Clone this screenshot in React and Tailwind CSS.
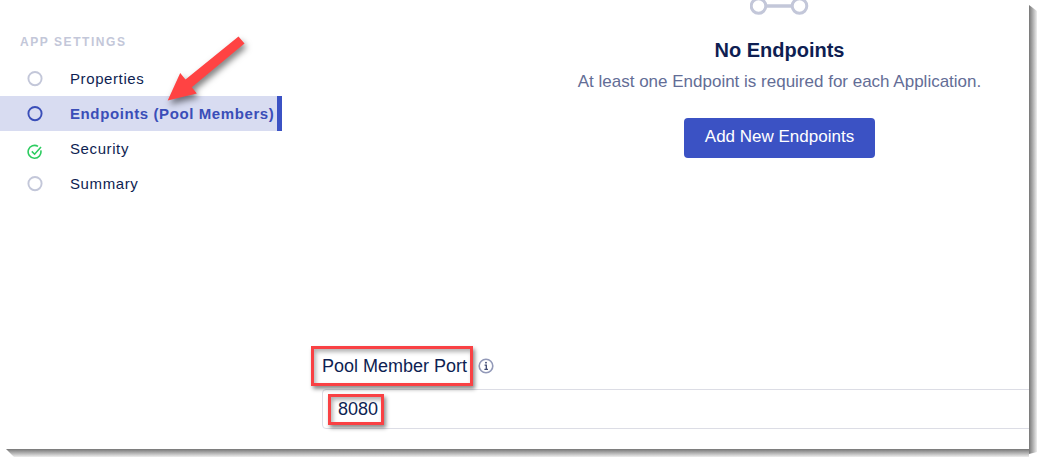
import React from 'react';

const steps = [
  { name: 'Properties', state: 'todo' },
  { name: 'Endpoints (Pool Members)', state: 'active' },
  { name: 'Security', state: 'done' },
  { name: 'Summary', state: 'todo' },
];

function StepIcon({ state }) {
  if (state === 'done') {
    return (
      <svg className="mt-1 size-4 shrink-0 text-[#2dcc60]" viewBox="0 0 16 16" fill="none" stroke="currentColor" strokeWidth="1.6" aria-hidden="true">
        <path d="M13.8 6.4A6.4 6.4 0 1 1 11 2.4" />
        <path d="M4.8 7.4 7.6 10.2 14 3" />
      </svg>
    );
  }
  return (
    <svg
      className={
        state === 'active'
          ? 'size-4 shrink-0 overflow-visible text-[#3a4eb8]'
          : 'size-4 shrink-0 overflow-visible text-[#c3c7d9]'
      }
      viewBox="0 0 16 16"
      fill="none"
      stroke="currentColor"
      strokeWidth="1.9"
      aria-hidden="true"
    >
      <circle cx="8" cy="6.6" r="6.6" />
    </svg>
  );
}

function Sidebar() {
  return (
    <nav aria-label="App settings" className="relative w-[282px] shrink-0 pt-[35px]">
      <h2 className="mb-3 pl-5 text-xs leading-[14px] font-bold tracking-[0.13em] text-[#c3c7d9]">APP SETTINGS</h2>
      <ul>
        {steps.map((step) => (
          <li key={step.name}>
            <a
              href="#"
              aria-current={step.state === 'active' ? 'step' : undefined}
              className={
                step.state === 'active'
                  ? 'flex h-[35px] items-center gap-[27px] border-r-[5px] border-[#3b52c4] bg-[#d8dcf1] pt-0.5 pl-[27px] text-[15px] font-bold tracking-[0.04em] whitespace-nowrap text-[#3a4eb8]'
                  : 'flex h-[35px] items-center gap-[27px] pt-0.5 pl-[27px] text-[15px] tracking-[0.04em] whitespace-nowrap text-[#0e1e52]'
              }
            >
              <StepIcon state={step.state} />
              {step.name}
            </a>
          </li>
        ))}
      </ul>
      <svg className="absolute top-8 left-40 h-20 w-24 overflow-visible drop-shadow-[2px_4px_3px_rgba(0,0,0,0.5)]" viewBox="0 0 96 80" aria-hidden="true">
        <path fill="#ff4343" d="M78.5 4.5 84.5 11.5 31.8 55.2 36.8 61.5 7.7 68.4 20.2 41 25.5 47.5Z" />
      </svg>
    </nav>
  );
}

function EmptyState() {
  return (
    <section className="flex flex-col items-center">
      <svg className="h-[15px] w-[60px]" viewBox="0 0 60 15" fill="none" stroke="#c3c7d9" aria-hidden="true">
        <circle cx="8.5" cy="6" r="7.3" strokeWidth="3" />
        <circle cx="49.5" cy="6" r="7.3" strokeWidth="3" />
        <path strokeWidth="3.5" d="M16 6h26" />
      </svg>
      <h1 className="mt-[23px] text-xl leading-6 font-bold text-[#0e1e52]">No Endpoints</h1>
      <p className="mt-2 text-[17px] leading-6 text-[#636d96]">At least one Endpoint is required for each Application.</p>
      <button type="button" className="mt-6 h-10 rounded bg-[#3b52c4] px-[21px] pb-0.5 text-[17px] text-white">
        Add New Endpoints
      </button>
    </section>
  );
}

function PortField() {
  return (
    <div className="mt-[188px] text-lg text-[#0e1e52]">
      <div className="-ml-[11px] flex items-center gap-[5px]">
        <label
          htmlFor="port"
          className="relative z-10 flex h-10 items-center border-[3px] border-[#f94144] pr-[3px] pl-2 shadow-[2px_3px_4px_rgba(0,0,0,0.45),inset_2px_3px_4px_rgba(0,0,0,0.3)]"
        >
          Pool Member Port
        </label>
        <svg className="size-4" viewBox="0 0 16 16" fill="none" stroke="#9299b8" strokeWidth="1.6" aria-hidden="true">
          <circle cx="8" cy="8" r="6.8" />
          <path stroke="#3d4871" strokeWidth="1.3" d="M6.6 7.2h1.7v4.2M6.4 11.4h3.6" />
          <circle cx="8" cy="4.7" r="0.9" fill="#3d4871" stroke="none" />
        </svg>
      </div>
      <div className="mt-[3px] flex h-10 items-center rounded border border-[#dcdde5] pl-[5px]">
        <input
          id="port"
          type="text"
          defaultValue="8080"
          className="h-[31px] w-14 border-[3px] border-[#f94144] pl-[7px] shadow-[2px_3px_4px_rgba(0,0,0,0.45),inset_2px_3px_4px_rgba(0,0,0,0.3)] outline-none"
        />
      </div>
    </div>
  );
}

export default function App() {
  return (
    <div className="overflow-hidden bg-white pr-[15px] pb-[15px] font-['Liberation_Sans',Arial,sans-serif]">
      <div className="relative bg-white">
        <div className="absolute top-[5px] left-full h-full w-2 bg-linear-to-r from-[#777] to-[#eee] [clip-path:polygon(0_0,100%_6px,100%_calc(100%-2px),0_100%)]" aria-hidden="true" />
        <div className="absolute top-full right-0 left-[6px] h-2 bg-linear-to-b from-[#777] to-[#eee] [clip-path:polygon(0_0,100%_0,100%_100%,8px_100%)]" aria-hidden="true" />
        <div className="relative flex bg-white">
          <Sidebar />
          <main className="min-w-0 flex-1 overflow-hidden pb-5 pl-10">
            <div className="-mr-52">
              <EmptyState />
              <PortField />
            </div>
          </main>
        </div>
      </div>
    </div>
  );
}
